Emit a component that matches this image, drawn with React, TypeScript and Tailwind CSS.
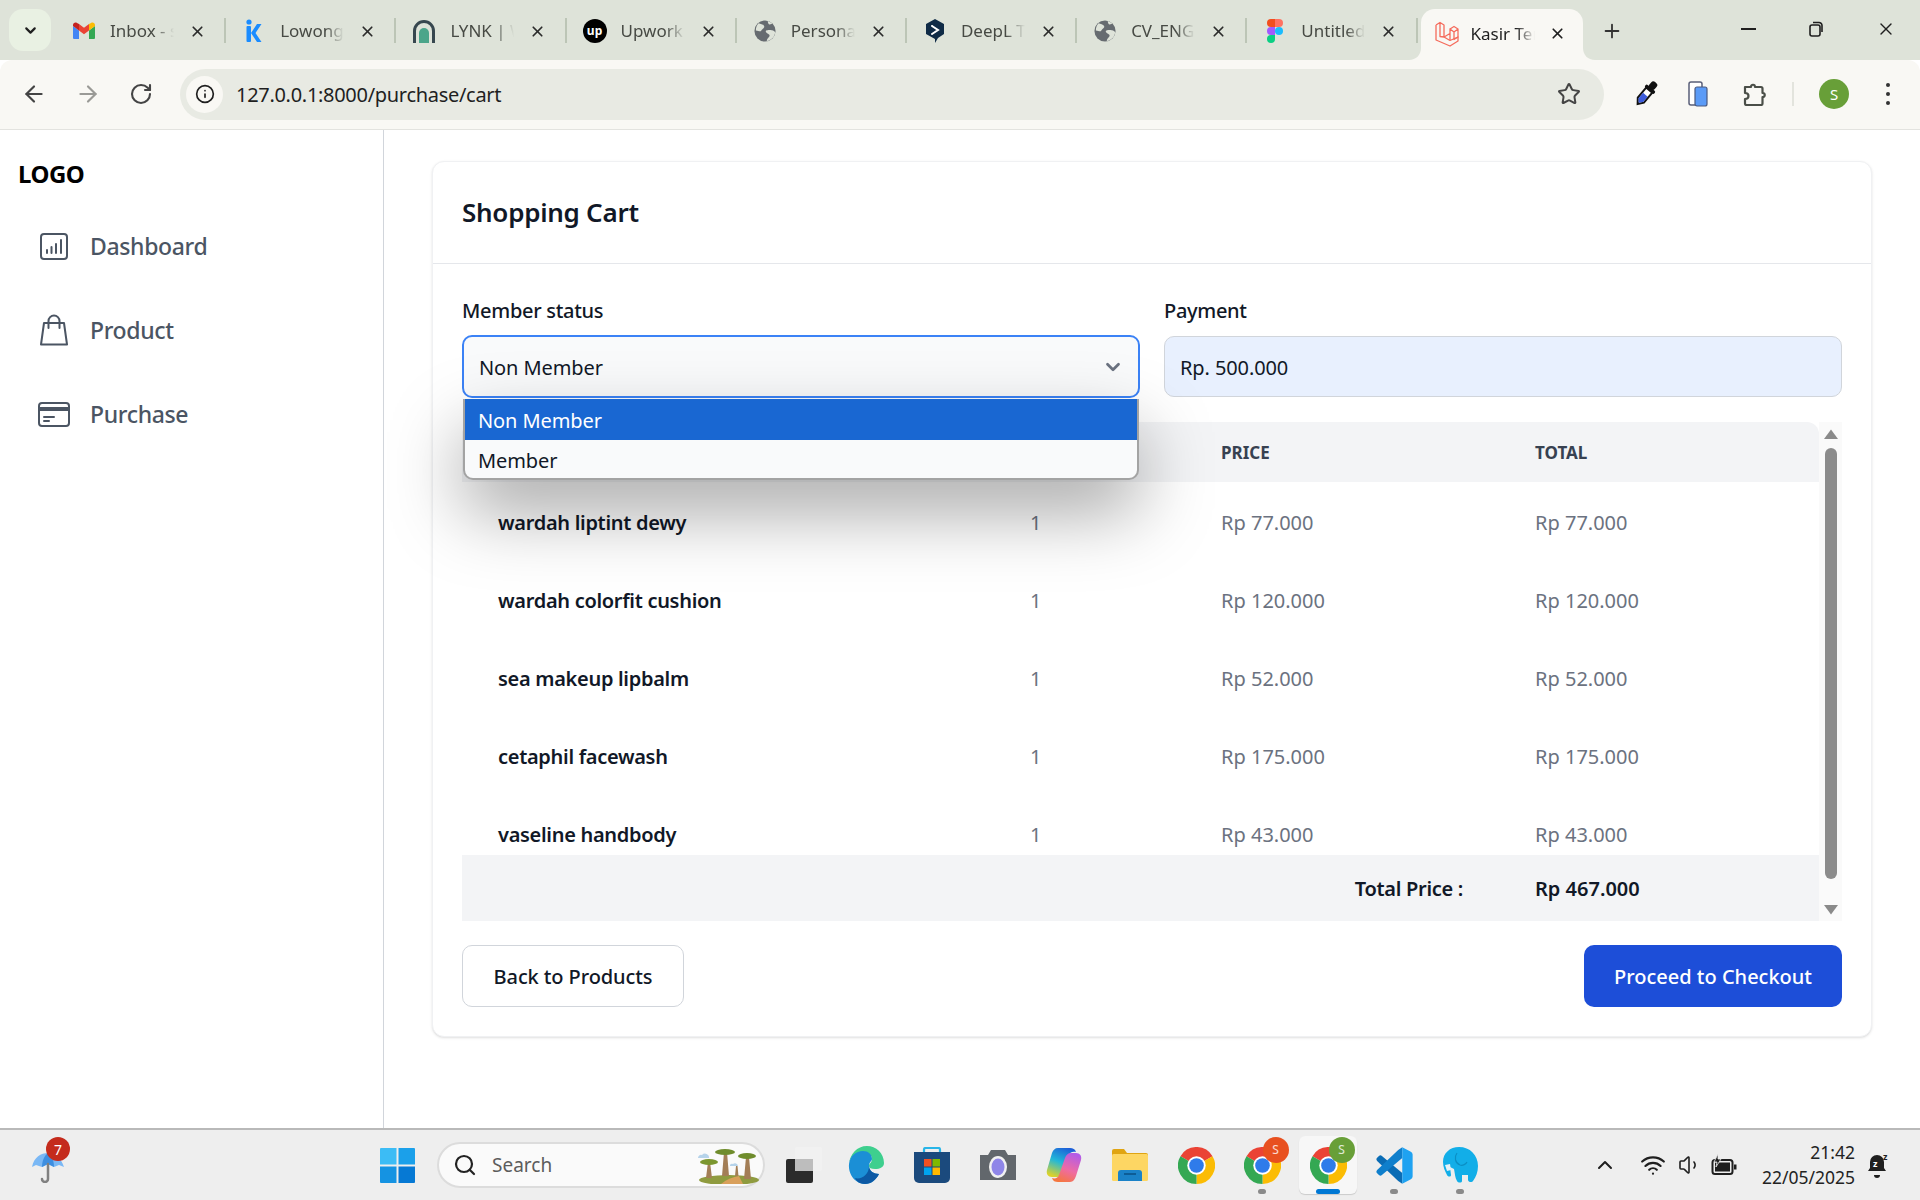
import { ArrowLeft, ArrowRight, ChevronDown, ChevronUp, Info, Plus, RotateCw, Search, Star, Volume1, Wifi, X } from "lucide-react";
import type { ReactNode } from "react";

const TABS: { title: string; icon: ReactNode }[] = [
  { title: "Inbox - sari", icon: <GmailIcon /> },
  { title: "Lowongan", icon: <KIcon /> },
  { title: "LYNK | Web", icon: <LynkIcon /> },
  { title: "Upwork", icon: <UpworkIcon /> },
  { title: "Personal", icon: <GlobeIcon /> },
  { title: "DeepL Tra", icon: <DeepLIcon /> },
  { title: "CV_ENG", icon: <GlobeIcon /> },
  { title: "Untitled", icon: <FigmaIcon /> },
];

const ITEMS = [
  { name: "wardah liptint dewy", price: "Rp 77.000" },
  { name: "wardah colorfit cushion", price: "Rp 120.000" },
  { name: "sea makeup lipbalm", price: "Rp 52.000" },
  { name: "cetaphil facewash", price: "Rp 175.000" },
  { name: "vaseline handbody", price: "Rp 43.000" },
];

export default function App() {
  return (
    <div className="flex h-screen flex-col overflow-hidden bg-white font-['Noto_Sans',sans-serif] text-[#111827]">
      <BrowserChrome />
      <div className="flex min-h-0 flex-1">
        <Sidebar />
        <main className="min-w-0 flex-1 px-12 pt-[31px]">
          <CartCard />
        </main>
      </div>
      <Taskbar />
    </div>
  );
}

function BrowserChrome() {
  return (
    <header className="shrink-0">
      <div className="flex h-[60px] bg-[#dee3d9] pl-[9px]">
        <div className="mt-[9px] mr-[5px] flex h-[42px] w-[42px] items-center justify-center rounded-[14px] bg-[#e9f1e3]">
          <ChevronDown size={17} strokeWidth={3} className="text-[#1f1f1f]" />
        </div>
        {TABS.map((tab) => (
          <div key={tab.title} className="relative flex h-[60px] w-[170.2px] shrink-0 items-center pt-[2px] pl-[16px]">
            <span className="flex w-[24px] justify-center">{tab.icon}</span>
            <span className="ml-[14px] w-[64px] overflow-hidden text-[17px] whitespace-nowrap text-[#474a44] [mask-image:linear-gradient(to_right,black_70%,transparent)]">
              {tab.title}
            </span>
            <X size={17} strokeWidth={2.4} className="ml-[15px] text-[#2b2b2b]" />
            <span className="absolute top-[18px] right-0 h-[25px] w-[2px] bg-[#bcc5b6]" />
          </div>
        ))}
        <div className="relative mt-[9px] ml-[3px] flex h-[51px] w-[162px] items-center rounded-t-[14px] bg-[#f9f8f4] pb-[2px] pl-[14px]">
          <LaravelIcon />
          <span className="ml-[12px] w-[64px] overflow-hidden text-[17px] whitespace-nowrap text-[#1f1f1f] [mask-image:linear-gradient(to_right,black_70%,transparent)]">
            Kasir Termurah
          </span>
          <X size={17} strokeWidth={2.4} className="ml-[14px] text-[#1f1f1f]" />
          <svg className="absolute bottom-0 -left-[12px]" width="12" height="12" viewBox="0 0 12 12">
            <path d="M12 0v12H0c7 0 12-5 12-12Z" fill="#f9f8f4" />
          </svg>
          <svg className="absolute -right-[12px] bottom-0" width="12" height="12" viewBox="0 0 12 12">
            <path d="M0 0v12h12C5 12 0 7 0 0Z" fill="#f9f8f4" />
          </svg>
        </div>
        <Plus size={22} strokeWidth={2} className="mt-[20px] ml-[18px] text-[#333]" />
        <div className="ml-auto flex h-[58px] items-center gap-[52px] pr-[24px] text-[#1f1f1f]">
          <span className="h-[2px] w-[15px] bg-[#1f1f1f]" />
          <svg width="16" height="16" viewBox="0 0 16 16" fill="none" stroke="#1f1f1f" strokeWidth="1.6">
            <rect x="2" y="4" width="10" height="11" rx="2" />
            <path d="M5 1.5h6a3 3 0 0 1 3 3V11" />
          </svg>
          <X size={20} strokeWidth={1.6} />
        </div>
      </div>
      <div className="flex h-[70px] items-center rounded-t-[12px] border-b border-[#e3e3df] bg-[#f9f8f4] pb-[1px]">
        <div className="flex items-center gap-[28px] pl-[21px]">
          <ArrowLeft size={26} strokeWidth={2} className="text-[#444]" />
          <ArrowRight size={26} strokeWidth={2} className="text-[#9a9a96]" />
          <RotateCw size={24} strokeWidth={2.1} className="text-[#444]" />
        </div>
        <div className="ml-[27px] flex h-[51px] w-[1424px] items-center rounded-full bg-[#e8eae3] pr-[23px] pl-[6px]">
          <span className="flex h-[37px] w-[37px] items-center justify-center rounded-full bg-[#f9f8f4]">
            <Info size={20} strokeWidth={2} className="text-[#1f1f1f]" />
          </span>
          <span className="ml-[13px] pt-[1px] text-[20px] tracking-[-0.015em] text-[#1f1f1f]">127.0.0.1:8000/purchase/cart</span>
          <Star size={24} strokeWidth={2} className="ml-auto text-[#444]" />
        </div>
        <span className="ml-[30px]"><EyedropperIcon /></span>
        <span className="ml-[30px]"><SidePanelIcon /></span>
        <span className="ml-[35px]"><PuzzleIcon /></span>
        <span className="ml-[25px] h-[24px] w-[2px] bg-[#e3e4dd]" />
        <span className="ml-[25px] flex h-[30px] w-[30px] items-center justify-center rounded-full bg-[#689f38] text-[15px] text-white">S</span>
        <span className="ml-[37px] flex flex-col gap-[5px]">
          <i className="h-[4px] w-[4px] rounded-full bg-[#333]" />
          <i className="h-[4px] w-[4px] rounded-full bg-[#333]" />
          <i className="h-[4px] w-[4px] rounded-full bg-[#333]" />
        </span>
      </div>
    </header>
  );
}

function Sidebar() {
  return (
    <aside className="w-[384px] shrink-0 border-r border-[#d1d5db] pl-[18px]">
      <div className="mt-[27px] text-[24px] leading-[33px] font-bold tracking-[-0.02em] text-black">LOGO</div>
      <nav className="mt-[35px] flex flex-col gap-[42px] pl-[22px] text-[23px] font-medium text-[#4b5563]">
        <NavItem label="Dashboard" icon={<DashboardIcon />} />
        <NavItem label="Product" icon={<BagIcon />} />
        <NavItem label="Purchase" icon={<CardIcon />} />
      </nav>
    </aside>
  );
}

function NavItem({ label, icon }: { label: string; icon: ReactNode }) {
  return (
    <div className="flex h-[42px] items-center">
      <span className="flex w-[50px] items-center">{icon}</span>
      <span className="tracking-[-0.015em]">{label}</span>
    </div>
  );
}

function CartCard() {
  return (
    <section className="rounded-xl border border-[#f0f1f3] bg-white shadow-sm">
      <h1 className="flex h-[102px] items-center border-b border-[#e5e7eb] px-[29px] text-[26px] font-semibold tracking-[-0.01em] text-[#111827]">
        Shopping Cart
      </h1>
      <div className="px-[29px] pt-[33px] pb-[29px]">
        <div className="grid grid-cols-2 gap-[24px]">
          <div className="relative z-10">
            <label className="block text-[20px] leading-[28px] font-medium tracking-[-0.015em]">Member status</label>
            <div className="mt-[10px] flex h-[63px] items-center justify-between rounded-[10px] border-2 border-[#3b82f6] bg-[#f9fafb] pr-[14px] pl-[15px] text-[20px] tracking-[-0.005em]">
              <span className="pt-[2px]">Non Member</span>
              <ChevronDown size={22} strokeWidth={3} className="text-[#6b7280]" />
            </div>
            <div className="absolute top-[102px] right-px left-px overflow-hidden rounded-b-[10px] border-x-2 border-b-2 border-[#a3a3a3] bg-[#f9fafb] text-[20px] tracking-[-0.005em] shadow-[0_32px_72px_rgba(0,0,0,0.35)]">
              <div className="flex h-[41px] items-center bg-[#1967d2] pt-[2px] pl-[13px] text-white">Non Member</div>
              <div className="flex h-[38px] items-center pt-[3px] pl-[13px]">Member</div>
            </div>
          </div>
          <div>
            <label className="block text-[20px] leading-[28px] font-medium tracking-[-0.015em]">Payment</label>
            <div className="mt-[11px] flex h-[61px] items-center rounded-[10px] border border-[#d1d5db] bg-[#e8f0fe] pt-[2px] pl-[15px] text-[20px] tracking-[-0.005em]">
              Rp. 500.000
            </div>
          </div>
        </div>

        <div className="mt-[24px] flex h-[499px]">
          <div className="flex min-w-0 flex-1 flex-col">
            <div className="min-h-0 flex-1 overflow-hidden">
              <table className="w-full table-fixed border-collapse text-left text-[20px]">
                <colgroup>
                  <col className="w-[535px]" />
                  <col className="w-[188px]" />
                  <col className="w-[314px]" />
                  <col />
                </colgroup>
                <thead>
                  <tr className="h-[60px] bg-[#f3f4f6] text-[17px] font-bold text-[#374151] uppercase">
                    <th className="rounded-tl-[12px] pt-[1px] pl-[36px]">Product</th>
                    <th className="pt-[1px] pl-[33px]">Qty</th>
                    <th className="pt-[1px] pl-[36px]">Price</th>
                    <th className="rounded-tr-[12px] pt-[1px] pl-[36px]">Total</th>
                  </tr>
                </thead>
                <tbody>
                  {ITEMS.map((item) => (
                    <tr key={item.name} className="h-[78px] text-[#6b7280]">
                      <td className="pt-[3px] pl-[36px] font-semibold tracking-[-0.015em] text-[#111827]">{item.name}</td>
                      <td className="pt-[3px] pl-[33px]">1</td>
                      <td className="pt-[3px] pl-[36px]">{item.price}</td>
                      <td className="pt-[3px] pl-[36px]">{item.price}</td>
                    </tr>
                  ))}
                </tbody>
              </table>
            </div>
            <div className="flex h-[66px] shrink-0 items-center justify-end bg-[#f3f4f6] pt-[2px] text-[20px] font-semibold">
              <span className="tracking-[-0.015em]">Total Price :</span>
              <span className="ml-[72px] w-[284px]">Rp 467.000</span>
            </div>
          </div>
          <Scrollbar />
        </div>

        <div className="mt-[24px] flex justify-between text-[20px] font-medium">
          <button className="h-[62px] w-[222px] rounded-[10px] border border-[#d1d5db] bg-white pt-[2px] tracking-[-0.005em]">Back to Products</button>
          <button className="h-[62px] w-[258px] rounded-[10px] bg-[#1d4ed8] pt-[2px] text-white">Proceed to Checkout</button>
        </div>
      </div>
    </section>
  );
}

function Scrollbar() {
  return (
    <div className="flex w-[23px] shrink-0 flex-col items-center bg-[#fafafa] pt-[7px]">
      <svg width="16" height="11" viewBox="0 0 16 11"><path d="M8 0.5 15 10H1Z" fill="#8a8a8a" /></svg>
      <div className="mt-[8px] h-[431px] w-[12px] rounded-full bg-[#8c8c8c]" />
      <svg className="mt-[25px]" width="16" height="11" viewBox="0 0 16 11"><path d="M8 10.5 15 1H1Z" fill="#8a8a8a" /></svg>
    </div>
  );
}

function Taskbar() {
  return (
    <footer className="flex h-[72px] shrink-0 items-center border-t-2 border-[#b9b9b9] bg-[#eeeeee]">
      <div className="relative ml-[30px] h-[36px] w-[36px]">
        <UmbrellaIcon />
        <span className="absolute -top-[10px] left-[16px] flex h-[24px] w-[24px] items-center justify-center rounded-full bg-[#c42b1c] text-[14px] text-white">7</span>
      </div>
      <div className="ml-[314px]"><WindowsIcon /></div>
      <div className="ml-[22px] flex h-[46px] w-[328px] shrink-0 items-center rounded-full border-2 border-[#dcdcdc] bg-[#fafafa] pl-[14px]">
        <Search size={24} strokeWidth={2.2} className="text-[#222]" />
        <span className="ml-[15px] text-[19px] text-[#5c5c5c]">Search</span>
        <span className="ml-auto mr-[4px]"><TreesIcon /></span>
      </div>
      <div className="ml-[2px] flex items-center">
        <TaskIcon><span className="ml-[7px] block"><TaskViewIcon /></span></TaskIcon>
        <TaskIcon><EdgeIcon /></TaskIcon>
        <TaskIcon><StoreIcon /></TaskIcon>
        <TaskIcon><CameraIcon /></TaskIcon>
        <TaskIcon><CopilotIcon /></TaskIcon>
        <TaskIcon><FolderIcon /></TaskIcon>
        <TaskIcon><ChromeIcon /></TaskIcon>
        <TaskIcon dot><ChromeIcon profile="#e8501f" /></TaskIcon>
        <TaskIcon active><ChromeIcon profile="#689f38" /></TaskIcon>
        <TaskIcon dot><VsCodeIcon /></TaskIcon>
        <TaskIcon dot><ElephantIcon /></TaskIcon>
      </div>
      <div className="ml-[100px] flex items-center text-[#1f1f1f]">
        <ChevronUp size={24} strokeWidth={2} />
        <Wifi size={26} strokeWidth={2} className="ml-[23px]" />
        <Volume1 size={24} strokeWidth={1.6} className="ml-[12px]" />
        <span className="ml-[9px]"><BatteryIcon /></span>
      </div>
      <div className="ml-[4px] w-[114px] text-right text-[17.5px] leading-[25px] text-[#222]">
        <div>21:42</div>
        <div>22/05/2025</div>
      </div>
      <span className="ml-[12px]"><BellIcon /></span>
    </footer>
  );
}

function TaskIcon({ children, active, dot }: { children: ReactNode; active?: boolean; dot?: boolean }) {
  return (
    <div className="relative flex h-[58px] w-[66px] items-center justify-center">
      {active && <span className="absolute inset-y-0 left-[4px] w-[58px] rounded-[6px] bg-[#f7f7f7] shadow-[0_1px_1px_rgba(0,0,0,0.15)]" />}
      <span className="relative">{children}</span>
      {dot && <span className="absolute bottom-0 h-[5px] w-[8px] rounded-full bg-[#8a8a8a]" />}
      {active && <span className="absolute bottom-0 h-[5px] w-[24px] rounded-full bg-[#0078d4]" />}
    </div>
  );
}

function DashboardIcon() {
  return (
    <svg width="28" height="27" viewBox="0 0 28 27" fill="none" stroke="#4b5563" strokeWidth="2" strokeLinecap="round">
      <rect x="1" y="1" width="26" height="25" rx="3" />
      <path d="M7 20v-3M11.5 20v-6M16 20v-9M21 20V7" />
    </svg>
  );
}

function BagIcon() {
  return (
    <svg width="28" height="32" viewBox="0 0 28 32" fill="none" stroke="#4b5563" strokeWidth="2" strokeLinecap="round" strokeLinejoin="round">
      <path d="M4 9h20l3 21.5H1L4 9Z" />
      <path d="M8.5 14V7a5.5 5.5 0 0 1 11 0v7" />
    </svg>
  );
}

function CardIcon() {
  return (
    <svg className="-ml-[2px]" width="32" height="25" viewBox="0 0 32 25" fill="none" stroke="#4b5563" strokeWidth="2" strokeLinecap="round">
      <rect x="1" y="1" width="30" height="23" rx="3" />
      <path d="M1 7h30" strokeWidth="4" />
      <path d="M6 15h10M6 19h5" />
    </svg>
  );
}

function GmailIcon() {
  return (
    <svg width="24" height="18" viewBox="0 0 24 18" fill="none">
      <path d="M1 17V4l6 4.5V17H2a1 1 0 0 1-1-1Z" fill="#4285f4" />
      <path d="M17 17V8.500L23 4v12a1 1 0 0 1-1 1h-5Z" fill="#34a853" />
      <path d="M17 2v6.500L23 4V3c0-2-2.300-3.200-4-2Z" fill="#fbbc04" />
      <path d="M7 8.500V2l5 3.800L17 2v6.500l-5 3.800Z" fill="#ea4335" />
      <path d="M1 3v1l6 4.500V2L5 1C3.300-.2 1 1 1 3Z" fill="#c5221f" />
    </svg>
  );
}

function KIcon() {
  return (
    <svg width="16" height="24" viewBox="0 0 16 24" fill="#1a8cff">
      <circle cx="3" cy="3" r="2.600" />
      <rect x="0.500" y="7" width="4.500" height="16" rx="1" />
      <path d="M5 14 11 5h4.500L9.500 14l6 9H11Z" />
    </svg>
  );
}

function LynkIcon() {
  return (
    <svg width="24" height="24" viewBox="0 0 24 24">
      <path d="M1 24V12a11 11 0 0 1 22 0v12h-3V12a8 8 0 0 0-16 0v12Z" fill="#37474f" />
      <path d="M7 24V14a5 5 0 0 1 10 0v10Z" fill="#4ba58a" />
    </svg>
  );
}

function UpworkIcon() {
  return (
    <span className="flex h-[24px] w-[24px] items-center justify-center rounded-full bg-black text-[12px] leading-none font-bold text-white">
      up
    </span>
  );
}

function GlobeIcon() {
  return (
    <svg width="22" height="22" viewBox="0 0 24 24">
      <circle cx="12" cy="12" r="11.500" fill="#666b70" />
      <path d="M5 3.500c2 1 5 1 6 3s-2 3-3 5-3 0-6 0c0-3 1-6 3-8ZM14 23c0-3 3-4 3-6s-3-2-4-4 3-2 5-2 4 1 5 2c0 5-4 9-9 10ZM15 1c2 .5 4 2 5 3l-3 1c-1 0-2-2-2-4Z" fill="#dee3d9" />
    </svg>
  );
}

function DeepLIcon() {
  return (
    <svg width="20" height="24" viewBox="0 0 20 24">
      <path d="M10 0l9 5v10l-6 4-3 5v-4l-9-5V5Z" fill="#0f2b46" />
      <path d="M7 7l6 4-6 4M7 7h.1M7 15h.1M13 11h.1" fill="none" stroke="#fff" strokeWidth="2" strokeLinecap="round" />
    </svg>
  );
}

function FigmaIcon() {
  return (
    <svg width="16" height="24" viewBox="0 0 16 24">
      <path d="M0 4a4 4 0 0 1 4-4h4v8H4a4 4 0 0 1-4-4Z" fill="#f24e1e" />
      <path d="M8 0h4a4 4 0 0 1 0 8H8Z" fill="#ff7262" />
      <path d="M0 12a4 4 0 0 1 4-4h4v8H4a4 4 0 0 1-4-4Z" fill="#a259ff" />
      <circle cx="12" cy="12" r="4" fill="#1abcfe" />
      <path d="M0 20a4 4 0 0 1 4-4h4v4a4 4 0 0 1-8 0Z" fill="#0acf83" />
    </svg>
  );
}

function LaravelIcon() {
  return (
    <svg width="24" height="26" viewBox="0 0 24 26" fill="none" stroke="#f56b5c" strokeWidth="1.300" strokeLinejoin="round">
      <path d="M1 4l4-2.500L9 4v12l6 3.500M1 4v15l14 6 8-5v-4l-8 3.500M5 1.500v14l4 .5" />
      <path d="M15 8l4-2.500L23 8v8l-4 2.500V11l-4-3v11.500M19 11l4-3M9 16l6-3.500" />
    </svg>
  );
}

function EyedropperIcon() {
  return (
    <svg width="24" height="28" viewBox="0 0 24 28">
      <g transform="rotate(40 12 14)">
        <rect x="8.500" y="-1" width="7" height="8" rx="2.500" fill="#111" />
        <rect x="6" y="6" width="12" height="3.500" rx="1.500" fill="#111" />
        <path d="M8 9h8v13l-4 5-4-5Z" fill="#fff" stroke="#111" strokeWidth="2" />
        <path d="M9 15h6v7l-3 3.500-3-3.500Z" fill="#3b5bdb" />
      </g>
    </svg>
  );
}

function SidePanelIcon() {
  return (
    <svg width="20" height="26" viewBox="0 0 20 26">
      <rect x="1" y="1" width="13" height="23" rx="2" fill="#fff" stroke="#5a5f78" strokeWidth="1.500" />
      <rect x="7" y="6" width="12" height="19" rx="2" fill="#5b9bf7" stroke="#4a5a80" strokeWidth="1.200" />
    </svg>
  );
}

function PuzzleIcon() {
  return (
    <svg width="24" height="24" viewBox="0 0 24 24" fill="none" stroke="#4b4f48" strokeWidth="2.200" strokeLinejoin="round">
      <path d="M2 5h6c0-3 4-3 4 0h6a1.500 1.500 0 0 1 1.500 1.500V11c3 0 3 4 0 4v6.500A1.500 1.500 0 0 1 18 23H3.500A1.500 1.500 0 0 1 2 21.500V17c3 0 3.500-2 3.500-3S5 11 2 11Z" />
    </svg>
  );
}

function UmbrellaIcon() {
  return (
    <svg width="36" height="36" viewBox="0 0 36 36">
      <path d="M2 20C4 10 11 6 18 6s13 5 16 14l-5-2-5 2-6-3-6 3-6-2Z" fill="#7ab8f5" />
      <path d="M18 6c-4 3-6 8-6 14l6-3 6 3c0-6-2-11-6-14Z" fill="#3d8ee0" />
      <path d="M18 17v15a3 3 0 0 1-6 0" fill="none" stroke="#808080" strokeWidth="2.500" strokeLinecap="round" />
    </svg>
  );
}

function WindowsIcon() {
  return (
    <svg width="35" height="35" viewBox="0 0 35 35">
      <path d="M0 1a1 1 0 0 1 1-1h15.500v16.500H0Z" fill="#3cbcf5" />
      <path d="M18.500 0H34a1 1 0 0 1 1 1v15.500H18.500Z" fill="#1ba0ea" />
      <path d="M0 18.500h16.500V35H1a1 1 0 0 1-1-1Z" fill="#1593e2" />
      <path d="M18.500 18.500H35V34a1 1 0 0 1-1 1H18.500Z" fill="#0679d4" />
    </svg>
  );
}

function TreesIcon() {
  return (
    <svg width="62" height="38" viewBox="0 0 62 38">
      <ellipse cx="32" cy="34" rx="30" ry="5" fill="#8f9b3f" />
      <path d="M24 38c6-5 12-7 18-8l4 8Z" fill="#d9a05b" />
      <path d="M9 32l2-16h2l2 16ZM25 30l2-24h3l2 24ZM47 33l2-22h3l2 22ZM38 30l1-10h1.500l1 10Z" fill="#a37e56" />
      <ellipse cx="12" cy="16" rx="9" ry="3" fill="#7b962f" />
      <ellipse cx="28" cy="6" rx="10" ry="3" fill="#6f8c2c" />
      <ellipse cx="50" cy="10" rx="9" ry="3" fill="#6f8c2c" />
      <path d="M1 12a3 3 0 0 1 4-3 4 4 0 0 1 7 3Z" fill="#b6d3ea" />
      <path d="M33 20a2 2 0 0 1 3-2 3 3 0 0 1 5 2Z" fill="#b6d3ea" />
    </svg>
  );
}

function TaskViewIcon() {
  return (
    <svg width="36" height="36" viewBox="0 0 36 36">
      <rect x="0" y="12" width="27" height="24" rx="2" fill="#2b2b2b" />
      <rect x="9" y="0" width="27" height="24" rx="2" fill="#f1f1f1" />
      <rect x="9" y="12" width="18" height="12" fill="#bdbdbd" />
    </svg>
  );
}

function EdgeIcon() {
  return (
    <svg width="36" height="38" viewBox="0 0 36 38">
      <path d="M1 18C2 8 9 0 19 0c9 0 17 7 17 17 0 4-4 6-9 6-4 0-6-1-6-3 0-3 3-3 3-7 0-4-4-7-9-7C8 6 2 11 1 18Z" fill="#3ecf8e" />
      <path d="M1 18C2 10 8 5 15 5c5 0 9 3 9 8 0 2-3 3-3 7 0 5 5 8 10 8-3 6-8 10-14 10C8 38 0 29 1 18Z" fill="#1b8fd6" />
      <path d="M21 20c0 5 5 8 10 8-3 6-8 10-14 10-5 0-9-3-10-6 6 2 14-3 14-12Z" fill="#0c59a4" />
    </svg>
  );
}

function StoreIcon() {
  return (
    <svg width="36" height="36" viewBox="0 0 36 36">
      <path d="M10 6V2.500A1.500 1.500 0 0 1 11.500 1h13A1.500 1.500 0 0 1 26 2.500V6" fill="none" stroke="#28b5e8" strokeWidth="2.200" />
      <path d="M0 5h36v26a5 5 0 0 1-5 5H5a5 5 0 0 1-5-5Z" fill="#1b4a7d" />
      <rect x="10" y="12" width="7.500" height="7.500" fill="#f25022" />
      <rect x="18.500" y="12" width="7.500" height="7.500" fill="#7fba00" />
      <rect x="10" y="20.500" width="7.500" height="7.500" fill="#00a4ef" />
      <rect x="18.500" y="20.500" width="7.500" height="7.500" fill="#ffb900" />
    </svg>
  );
}

function CameraIcon() {
  return (
    <svg width="36" height="30" viewBox="0 0 36 30">
      <path d="M0 5h8l3-5h14l3 5h8v25H0Z" fill="#62676c" />
      <ellipse cx="18" cy="17" rx="9" ry="11" fill="#f1f1f1" />
      <ellipse cx="18" cy="17" rx="6.500" ry="8.500" fill="#8f86e8" />
    </svg>
  );
}

function CopilotIcon() {
  return (
    <svg width="36" height="36" viewBox="0 0 36 36">
      <defs>
        <linearGradient id="copilot-left" x1="0.700" y1="0" x2="0.300" y2="1">
          <stop offset="0" stopColor="#1d5fd8" />
          <stop offset="0.500" stopColor="#22b8d8" />
          <stop offset="1" stopColor="#dcd22a" />
        </linearGradient>
        <linearGradient id="copilot-right" x1="0.700" y1="0" x2="0.300" y2="1">
          <stop offset="0" stopColor="#b25ce8" />
          <stop offset="0.550" stopColor="#ee6ba4" />
          <stop offset="1" stopColor="#f5773f" />
        </linearGradient>
      </defs>
      <path d="M12 1h12c3 0 5 1 6 4-3-1-6 0-7 3l-6 17c-1 3-3 5-6 5H6c-4 0-6-3-5-7L6 6c1-3 3-5 6-5Z" fill="url(#copilot-left)" />
      <path d="M24 35H12c-3 0-5-1-6-4 3 1 6 0 7-3l6-17c1-3 3-5 6-5h5c4 0 6 3 5 7l-5 16c-1 3-3 6-6 6Z" fill="url(#copilot-right)" />
    </svg>
  );
}

function FolderIcon() {
  return (
    <svg width="36" height="32" viewBox="0 0 36 32">
      <path d="M0 2a2 2 0 0 1 2-2h10l3 4h19a2 2 0 0 1 2 2v4H0Z" fill="#e0a412" />
      <rect x="0" y="5" width="36" height="27" rx="1.500" fill="#fdd663" />
      <path d="M6 24a3 3 0 0 1 3-3h18a3 3 0 0 1 3 3v8H6Z" fill="#1a82c8" />
      <rect x="12" y="24" width="12" height="2" fill="#0d5d96" />
    </svg>
  );
}

function ChromeIcon({ profile }: { profile?: string }) {
  return (
    <div className="relative h-[37px] w-[37px]">
      <svg width="37" height="37" viewBox="0 0 48 48">
        <path d="M24 24 3.200 12A24 24 0 0 1 44.800 12Z" fill="#ea4335" />
        <path d="M24 24 44.800 12A24 24 0 0 1 24 48Z" fill="#fbbc04" />
        <path d="M24 24 24 48A24 24 0 0 1 3.200 12Z" fill="#34a853" />
        <circle cx="24" cy="24" r="12" fill="#fff" />
        <circle cx="24" cy="24" r="9.500" fill="#2f7bea" />
      </svg>
      {profile && (
        <span
          className="absolute -top-[10px] -right-[8px] flex h-[26px] w-[26px] items-center justify-center rounded-full text-[12px] text-white/80"
          style={{ backgroundColor: profile }}
        >
          S
        </span>
      )}
    </div>
  );
}

function VsCodeIcon() {
  return (
    <svg width="37" height="37" viewBox="0 0 100 100">
      <path d="M71 99 60 92 3 38Q-1 33 3 29l5-5q4-3 8 0l55 46Z" fill="#0a6cb5" />
      <path d="M71 1 60 8 3 62q-4 5 0 9l5 5q4 3 8 0L71 30Z" fill="#0f7fcc" />
      <path d="M71 1 93 12q6 3 6 8v60q0 5-6 8L71 99Z" fill="#1fa2f1" />
    </svg>
  );
}

function ElephantIcon() {
  return (
    <svg width="36" height="38" viewBox="0 0 36 38">
      <path d="M17 1C8 1 1 7 1 16c0 5 2 9 4 13 1 2 4 2 4 0l-1-8 4 2c1 5 1 9 3 12 1 2 5 2 5 0v-6h6v5c0 2 4 3 5 1 3-4 5-9 5-15C36 9 28 1 17 1Z" fill="#12aee8" />
      <path d="M15 7c-3 4-2 10 3 12 3 1 6-1 7-3" fill="none" stroke="#0b8fc4" strokeWidth="1.200" />
      <path d="M3 19l5-1 1 6-4 1Z" fill="#e6f2f8" />
    </svg>
  );
}

function BatteryIcon() {
  return (
    <svg width="26" height="22" viewBox="0 0 26 22" fill="none">
      <rect x="1.500" y="6" width="20" height="14" rx="2.500" stroke="#1f1f1f" strokeWidth="2" />
      <rect x="4" y="8.500" width="15" height="9" fill="#1f1f1f" />
      <rect x="23" y="10.500" width="2.500" height="5" fill="#1f1f1f" />
      <path d="M7 0 3 8h3l-1 5 5-8H7Z" fill="#1f1f1f" stroke="#eeeeee" strokeWidth=".8" />
    </svg>
  );
}

function BellIcon() {
  return (
    <svg width="24" height="26" viewBox="0 0 24 26">
      <path d="M10 3a7 7 0 0 0-7 7v6l-2 3h18l-2-3v-6a7 7 0 0 0-7-7Z" fill="#1f1f1f" />
      <path d="M7 23h6a3 3 0 0 1-6 0Z" fill="#1f1f1f" />
      <text x="6" y="15" fontSize="9" fontWeight="700" fill="#fff" fontFamily="Noto Sans">z</text>
      <text x="16" y="8" fontSize="9" fontWeight="700" fill="#1f1f1f" fontFamily="Noto Sans">z</text>
    </svg>
  );
}
